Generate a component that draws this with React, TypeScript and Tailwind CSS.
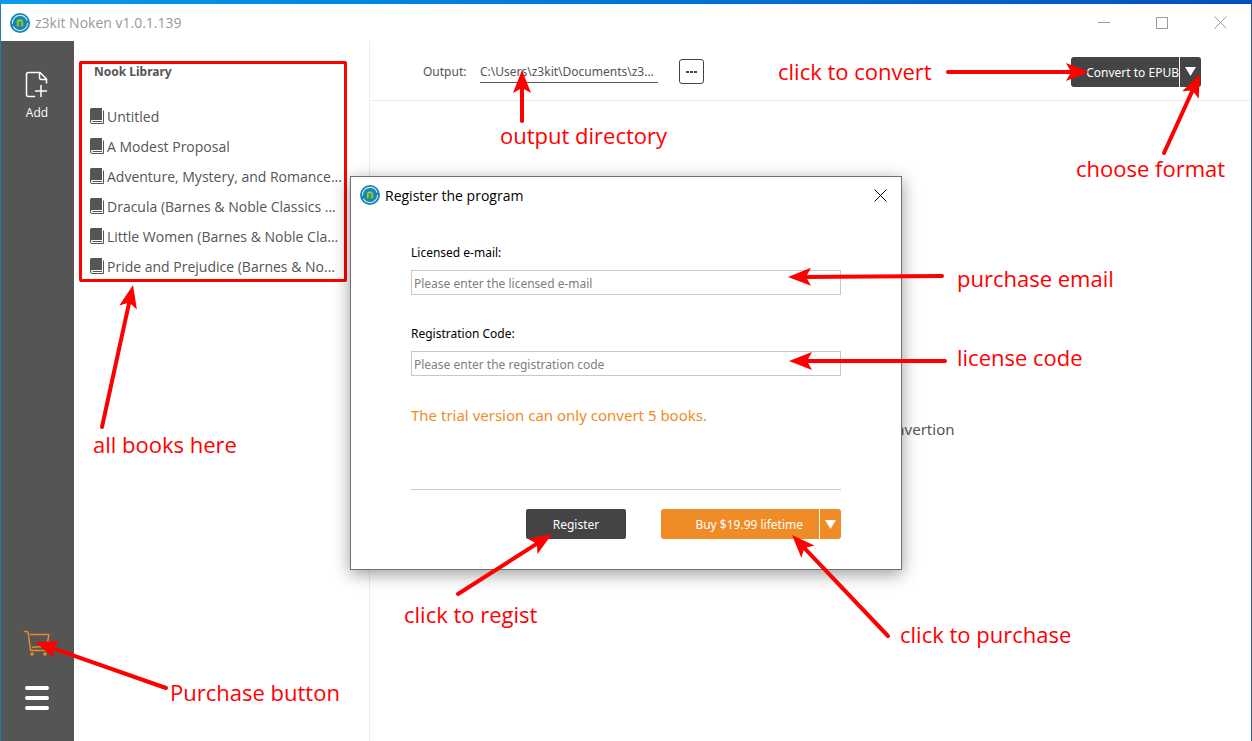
import { useId, useState } from 'react'
import type { ReactNode } from 'react'

const BOOKS = [
  'Untitled',
  'A Modest Proposal',
  'Adventure, Mystery, and Romance...',
  'Dracula (Barnes & Noble Classics ...',
  'Little Women (Barnes & Noble Cla...',
  'Pride and Prejudice (Barnes & No...',
]

interface Arrow {
  from: [number, number]
  to: [number, number]
}

const ARROWS: Arrow[] = [
  { from: [102, 427], to: [133, 285] },
  { from: [522, 121], to: [522, 70] },
  { from: [948, 72], to: [1089, 72] },
  { from: [1164, 153], to: [1200, 74] },
  { from: [942, 276], to: [788, 277] },
  { from: [945, 361], to: [789, 361] },
  { from: [458, 594], to: [552, 534] },
  { from: [888, 636], to: [792, 535] },
  { from: [166, 688], to: [35, 642] },
]

function Logo() {
  return (
    <svg width="20" height="20" viewBox="0 0 20 20" aria-hidden="true" className="shrink-0">
      <circle cx="10" cy="10" r="10" fill="#1584b8" />
      <circle cx="10" cy="10" r="7.6" fill="none" stroke="#c4e6f3" strokeWidth="1.2" strokeDasharray="20 3 22 3" />
      <rect x="6" y="6" width="8" height="8" rx="1.5" fill="#3c9a50" />
      <path d="M7.8 13V9.4a2.2 2.2 0 0 1 4.4 0V13" fill="none" stroke="#a9cf78" strokeWidth="1.2" />
    </svg>
  )
}

function CloseIcon() {
  return (
    <svg width="13" height="13" viewBox="0 0 13 13" stroke="currentColor" aria-hidden="true">
      <path d="M.5.5l12 12M12.5.5l-12 12" />
    </svg>
  )
}

function BookIcon() {
  return (
    <svg width="14" height="16" viewBox="0 0 14 16" aria-hidden="true" className="shrink-0">
      <path d="M1 0h11v12H2.500Q1.500 12 .5 13V.5z" fill="#555" />
      <path d="M.5 1v13q0 1.500 1.500 1.500h11.500V2.500M2.500 13.500h9.500" fill="none" stroke="#555" />
    </svg>
  )
}

function DownTriangle() {
  return (
    <svg width="11" height="9" viewBox="0 0 11 9" fill="white" aria-hidden="true">
      <path d="M0 0h11L5.500 9z" />
    </svg>
  )
}

function SplitButton({ children, menuLabel, tone }: { children: ReactNode; menuLabel: string; tone: string }) {
  return (
    <div className="flex h-[30px] gap-px text-xs text-white">
      <button type="button" className={`flex flex-1 items-center justify-end whitespace-nowrap rounded-l-[3px] pt-0.5 ${tone}`}>
        {children}
      </button>
      <button type="button" aria-label={menuLabel} className={`flex w-[21px] items-center justify-center rounded-r-[3px] ${tone}`}>
        <DownTriangle />
      </button>
    </div>
  )
}

function TitleBar() {
  return (
    <header className="flex h-[37px] items-center justify-between pl-[9px] pr-6 text-[#999]">
      <div className="flex items-center gap-[5px]">
        <Logo />
        <h1 className="text-[14px]">z3kit Noken v1.0.1.139</h1>
      </div>
      <div className="flex items-center gap-[46px]">
        <button type="button" aria-label="Minimize">
          <svg width="12" height="12" viewBox="0 0 12 12" stroke="currentColor" aria-hidden="true">
            <path d="M0 5.500h12" />
          </svg>
        </button>
        <button type="button" aria-label="Maximize">
          <svg width="12" height="12" viewBox="0 0 12 12" fill="none" stroke="currentColor" aria-hidden="true">
            <path d="M.5.5h11v11H.5z" />
          </svg>
        </button>
        <button type="button" aria-label="Close">
          <CloseIcon />
        </button>
      </div>
    </header>
  )
}

function Sidebar() {
  return (
    <nav className="flex w-[73px] shrink-0 flex-col items-center bg-[#555] pb-[31px] pr-px pt-[30px] text-white">
      <button type="button" className="flex flex-col items-center gap-1.5 text-xs">
        <svg width="24" height="28" viewBox="0 0 24 28" fill="none" stroke="white" strokeWidth="1.500" strokeLinecap="round" strokeLinejoin="round" aria-hidden="true">
          <path d="M9.500 25.500H3.500Q1.500 25.500 1.500 23.500V3.500Q1.500 1.500 3.500 1.500H15L21.500 8V12M14.500 2V6.500Q14.500 8.500 16.500 8.500H21M16 14.500V25.500M10.500 20H21.500" />
        </svg>
        Add
      </button>
      <button type="button" aria-label="Purchase" className="mt-auto">
        <svg width="28" height="28" viewBox="0 0 28 28" fill="none" stroke="#e98a25" strokeWidth="1.500" strokeLinecap="round" strokeLinejoin="round" aria-hidden="true">
          <path d="M1.500 1.500H3.500Q5 1.500 5.200 3.200L7.600 20.500H23.500M7.500 4.500H25Q26 4.500 25.800 5.500L24 15.200Q23.800 16.300 22.500 16.400L9.500 17.200" />
          <circle cx="9" cy="24" r="1.800" fill="#e98a25" stroke="none" />
          <circle cx="22" cy="24" r="1.800" fill="#e98a25" stroke="none" />
        </svg>
      </button>
      <button type="button" aria-label="Menu" className="mt-7">
        <svg width="24" height="24" viewBox="0 0 24 24" stroke="white" strokeWidth="4" strokeLinecap="round" aria-hidden="true">
          <path d="M2 2h20M2 12h20M2 22h20" />
        </svg>
      </button>
    </nav>
  )
}

function Library() {
  return (
    <section className="w-[296px] shrink-0 border-r border-[#ededed] pl-[5px] pt-5 text-[#555]">
      <div className="h-[221px] w-[268px] rounded-[2px] border-[3px] border-[#ff0000] pl-2">
        <h2 className="pl-1 font-['Noto_Sans',sans-serif] text-xs font-bold leading-4">Nook Library</h2>
        <ul className="pt-[21px]">
          {BOOKS.map((book) => (
            <li key={book} className="flex h-[30px] items-center gap-[3px] whitespace-nowrap text-[14px]">
              <BookIcon />
              {book}
            </li>
          ))}
        </ul>
      </div>
    </section>
  )
}

function Toolbar() {
  const outputId = useId()
  const [output, setOutput] = useState('C:\\Users\\z3kit\\Documents\\z3...')

  return (
    <div className="flex h-[60px] items-center border-b border-[#ededed] pl-[53px] pr-[50px] pt-0.5 font-['Noto_Sans',sans-serif] text-xs text-[#555]">
      <label htmlFor={outputId} className="w-[57px]">
        Output:
      </label>
      <input
        id={outputId}
        value={output}
        onChange={(event) => setOutput(event.target.value)}
        className="h-[23px] w-[178px] border-b border-[#555] outline-none"
      />
      <button type="button" aria-label="Browse" className="ml-[21px] flex h-[25px] w-[25px] items-center justify-center rounded-[3px] border border-[#444]">
        <svg width="11" height="2" viewBox="0 0 11 2" fill="#444" aria-hidden="true">
          <path d="M0 0h3v2H0zM4 0h3v2H4zM8 0h3v2H8z" />
        </svg>
      </button>
      <div className="ml-auto w-[130px]">
        <SplitButton tone="bg-[#444]" menuLabel="Choose format">
          Convert to EPUB
        </SplitButton>
      </div>
    </div>
  )
}

function Field({ label, placeholder, type }: { label: string; placeholder: string; type: string }) {
  const id = useId()
  return (
    <div className="flex flex-col gap-2">
      <label htmlFor={id} className="leading-[18px]">
        {label}
      </label>
      <input id={id} type={type} placeholder={placeholder} className="h-[25px] border border-[#c8c8c8] px-0.5 pt-0.5 outline-none placeholder:text-[#808080]" />
    </div>
  )
}

function RegisterDialog() {
  return (
    <div className="absolute inset-0 flex items-center justify-center pt-[5px]">
      <form
        role="dialog"
        aria-label="Register the program"
        onSubmit={(event) => event.preventDefault()}
        className="w-[552px] border border-[#707070] bg-white pb-[30px] shadow-[0_4px_16px_rgba(0,0,0,0.4)]"
      >
        <div className="flex h-9 items-center gap-[5px] pl-[9px] pr-[14px] text-[14px] text-black">
          <Logo />
          <h2 className="flex-1">Register the program</h2>
          <button type="button" aria-label="Close">
            <CloseIcon />
          </button>
        </div>
        <div className="flex flex-col px-[60px] pt-[31px] font-['Noto_Sans',sans-serif] text-xs text-black">
          <div className="flex flex-col gap-[30px]">
            <Field label="Licensed e-mail:" placeholder="Please enter the licensed e-mail" type="email" />
            <Field label="Registration Code:" placeholder="Please enter the registration code" type="text" />
          </div>
          <p className="mt-7 h-[86px] border-b border-[#c8c8c8] text-[15px] leading-[22px] text-[#ef8c26]">
            The trial version can only convert 5 books.
          </p>
          <div className="mt-[19px] flex justify-end gap-[35px]">
            <button type="submit" className="h-[30px] w-[100px] rounded-[2px] bg-[#444] pt-0.5 text-white">
              Register
            </button>
            <div className="w-[180px]">
              <SplitButton tone="bg-[#ef8c26]" menuLabel="More licenses">
                <span className="pr-4">Buy $19.99 lifetime</span>
              </SplitButton>
            </div>
          </div>
        </div>
      </form>
    </div>
  )
}

function ArrowShape({ from, to }: Arrow) {
  const angle = (Math.atan2(to[1] - from[1], to[0] - from[0]) * 180) / Math.PI
  const length = Math.hypot(to[0] - from[0], to[1] - from[1])
  return (
    <g transform={`translate(${to[0]} ${to[1]}) rotate(${angle})`}>
      <path d={`M${-length} 0H-16`} stroke="#ff0000" strokeWidth="4" strokeLinecap="round" />
      <path d="M0 0L-23 9L-18 0L-23 -9z" fill="#ff0000" />
    </g>
  )
}

function Note({ className, children }: { className: string; children: ReactNode }) {
  return <p className={`absolute whitespace-nowrap text-[22px] leading-[30px] text-[#ff0000] ${className}`}>{children}</p>
}

function Annotations() {
  return (
    <div className="pointer-events-none absolute inset-0 overflow-hidden">
      <svg className="absolute inset-0 h-full w-full" aria-hidden="true">
        {ARROWS.map((arrow) => (
          <ArrowShape key={arrow.to.join()} {...arrow} />
        ))}
      </svg>
      <Note className="left-[93px] top-[429px]">all books here</Note>
      <Note className="left-[500px] top-[120px]">output directory</Note>
      <Note className="left-[778px] top-[56px]">click to convert</Note>
      <Note className="left-[1076px] top-[153px]">choose format</Note>
      <Note className="left-[957px] top-[263px]">purchase email</Note>
      <Note className="left-[957px] top-[342px]">license code</Note>
      <Note className="left-[404px] top-[599px]">click to regist</Note>
      <Note className="left-[900px] top-[619px]">click to purchase</Note>
      <Note className="left-[170px] top-[677px]">Purchase button</Note>
    </div>
  )
}

export default function App() {
  return (
    <div className="relative flex min-h-screen flex-col bg-white font-['Open_Sans',sans-serif]">
      <div className="h-1 bg-linear-to-r from-[#0a9cec] to-[#0050c0]" />
      <div className="flex flex-1 flex-col border-l border-r border-l-[#1f7fae] border-r-[#2d5c9e]">
        <TitleBar />
        <div className="flex flex-1">
          <Sidebar />
          <Library />
          <main className="flex flex-1 flex-col">
            <Toolbar />
            <div className="flex flex-1 items-center justify-center pt-4">
              <p className="w-[288px] text-right font-['Noto_Sans',sans-serif] text-[15px] text-[#555]">convertion</p>
            </div>
          </main>
        </div>
      </div>
      <RegisterDialog />
      <Annotations />
    </div>
  )
}
